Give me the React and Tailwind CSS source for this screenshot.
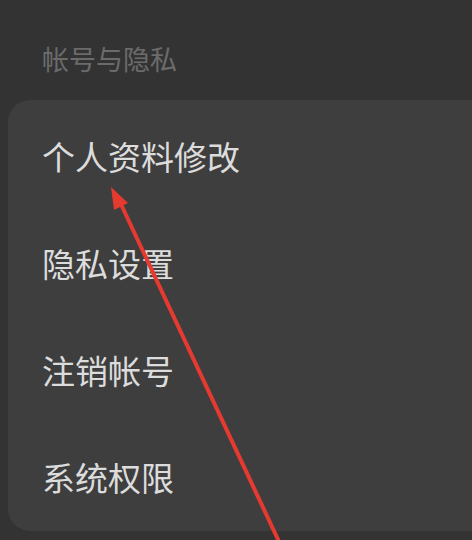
const items = ["个人资料修改", "隐私设置", "注销帐号", "系统权限"];

const cjk = { fontFamily: '"Noto Sans CJK SC", "Noto Sans", sans-serif' };

export default function App() {
  return (
    <div
      className="relative w-[472px] h-[540px] overflow-hidden bg-[#333333]"
      style={cjk}
    >
      <div className="h-[100px] pl-[42px] pt-[45px]">
        <div className="text-[27px] leading-[28px] text-[#6b6b6b]">帐号与隐私</div>
      </div>

      <div className="ml-[8px] rounded-l-[22px] bg-[#3e3e3e] pt-[3px]">
        {items.map((label) => (
          <div
            key={label}
            className="h-[107px] flex items-center pl-[34px] text-[33px] text-[#dcdcdc]"
          >
            {label}
          </div>
        ))}
      </div>

      {/* red annotation arrow */}
      <svg
        className="absolute left-0 top-0 pointer-events-none"
        width="472"
        height="540"
        viewBox="0 0 472 540"
      >
        <line
          x1="282"
          y1="548"
          x2="119"
          y2="200"
          stroke="#e53a30"
          strokeWidth="4"
          strokeLinecap="round"
        />
        <polygon points="111,187 128,203 114,210" fill="#e53a30" />
      </svg>
    </div>
  );
}
